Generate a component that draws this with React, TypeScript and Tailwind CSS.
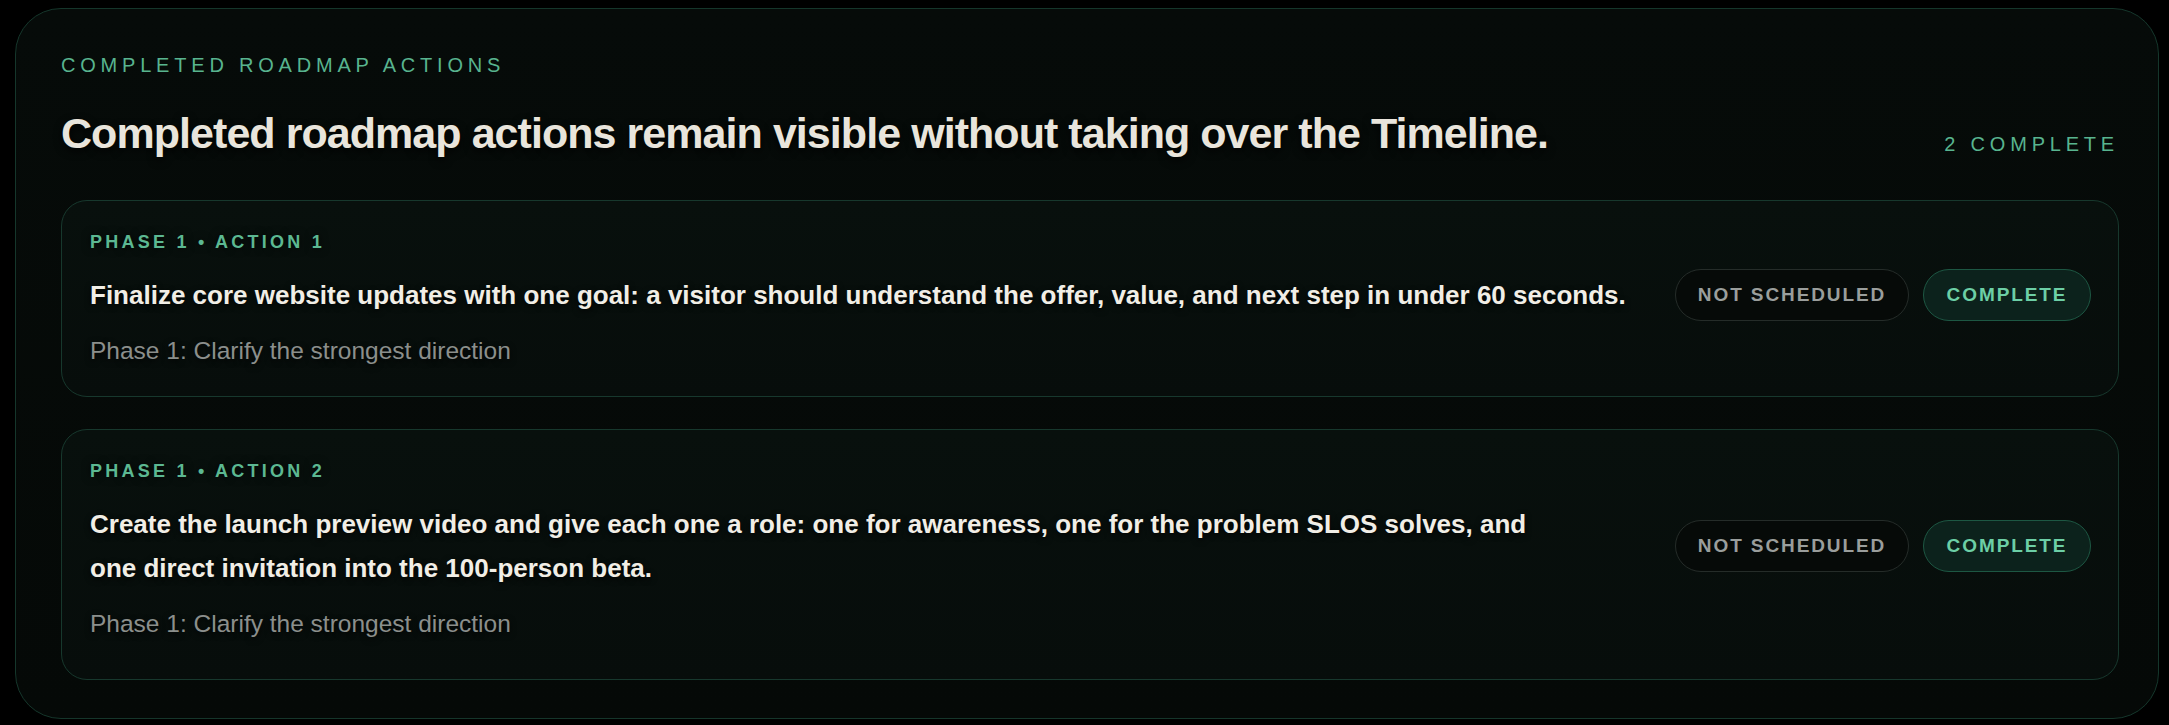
import React from "react";

const font = { fontFamily: '"Liberation Sans", Arial, sans-serif' };

type Item = { label: string; title: React.ReactNode; phase: string };

const items: Item[] = [
  {
    label: "PHASE 1 • ACTION 1",
    title:
      "Finalize core website updates with one goal: a visitor should understand the offer, value, and next step in under 60 seconds.",
    phase: "Phase 1: Clarify the strongest direction",
  },
  {
    label: "PHASE 1 • ACTION 2",
    title: (
      <>
        Create the launch preview video and give each one a role: one for awareness, one for the problem SLOS solves, and
        <br />
        one direct invitation into the 100-person beta.
      </>
    ),
    phase: "Phase 1: Clarify the strongest direction",
  },
];

function Card({ item, extra }: { item: Item; extra?: boolean }) {
  return (
    <div
      className={
        extra
          ? "rounded-[26px] border border-[#17382d] bg-[linear-gradient(180deg,#08100d_0%,#070d0b_100%)] pl-[28px] pr-[27px] pt-[28px] pb-[40px]"
          : "rounded-[26px] border border-[#17382d] bg-[linear-gradient(180deg,#08100d_0%,#070d0b_100%)] pl-[28px] pr-[27px] pt-[28px] pb-[30px]"
      }
    >
      <div className="text-[18px] font-bold leading-[26px] tracking-[0.18em] text-[#5cb892] [text-shadow:0_0_8px_rgba(0,0,0,0.9)]">
        {item.label}
      </div>
      <div className="mt-[18px] flex items-center gap-[16px]">
        <div className="min-w-0 flex-1 text-[26px] font-bold leading-[44px] text-[#f1eee6] [text-shadow:0_2px_6px_rgba(0,0,0,0.9)]">
          {item.title}
        </div>
        <div className="flex h-[44px] shrink-0 items-center gap-[14px]">
          <div className="flex h-[52px] w-[234px] items-center justify-center rounded-full border-[1.5px] border-[#252c29] bg-[#060a08] text-[19px] font-bold tracking-[0.1em] text-[#9a9e9c]">
            NOT SCHEDULED
          </div>
          <div className="flex h-[52px] w-[168px] items-center justify-center rounded-full border-[1.5px] border-[#1d5743] bg-[#0c221c] text-[19px] font-bold tracking-[0.1em] text-[#6ccfa6]">
            COMPLETE
          </div>
        </div>
      </div>
      <div className="mt-[19px] text-[24.5px] leading-[30px] text-[#8b8f8c] [text-shadow:0_2px_6px_rgba(0,0,0,0.9)]">
        {item.phase}
      </div>
    </div>
  );
}

export default function App() {
  return (
    <div className="h-[725px] w-full bg-black pl-[15px] pr-[10px] pt-[8px]" style={font}>
      <div className="h-[711px] rounded-[46px] border border-[#15362b] bg-[linear-gradient(180deg,#060b09_0%,#050907_100%)] pl-[45px] pr-[39px] pt-[42px]">
        <div className="flex items-end justify-between">
          <div>
            <div className="text-[20px] leading-[28px] tracking-[0.24em] text-[#58b48f]">
              COMPLETED ROADMAP ACTIONS
            </div>
            <h1 className="mt-[28px] text-[43px] font-bold leading-[52px] tracking-[-0.022em] text-[#e9e5dc] [text-shadow:0_3px_8px_rgba(0,0,0,0.9)]">
              Completed roadmap actions remain visible without taking over the Timeline.
            </h1>
          </div>
          <div className="pb-px text-[20px] leading-[28px] tracking-[0.24em] text-[#58b48f]">2 COMPLETE</div>
        </div>
        <div className="mt-[41px] flex flex-col gap-[32px]">
          {items.map((it, i) => (
            <Card key={i} item={it} extra={i === 1} />
          ))}
        </div>
      </div>
    </div>
  );
}
